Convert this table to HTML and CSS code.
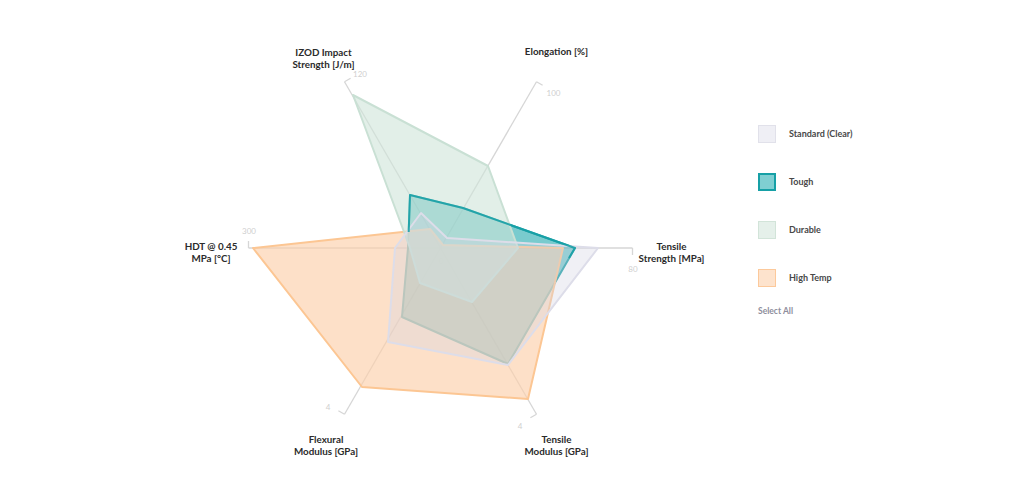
FILE: index.html
```html
<!DOCTYPE html>
<html lang="en">
<head>
<meta charset="utf-8">
<title>Material properties</title>
<link rel="stylesheet" href="styles.css">
</head>
<body>
<div class="page">
  <div class="chart">
    <svg class="radar" width="740" height="499" viewBox="0 0 740 499" xmlns="http://www.w3.org/2000/svg">
      <g class="axes">
        <line x1="440.5" y1="248" x2="632.5" y2="248"/>
        <line x1="632.5" y1="248" x2="632.5" y2="255"/>
        <line x1="440.5" y1="248" x2="536.5" y2="414.3"/>
        <line x1="536.5" y1="414.3" x2="530.4" y2="417.8"/>
        <line x1="440.5" y1="248" x2="344.5" y2="414.3"/>
        <line x1="344.5" y1="414.3" x2="338.4" y2="410.8"/>
        <line x1="440.5" y1="248" x2="248.5" y2="248"/>
        <line x1="248.5" y1="248" x2="248.5" y2="241"/>
        <line x1="440.5" y1="248" x2="344.5" y2="81.7"/>
        <line x1="344.5" y1="81.7" x2="350.6" y2="78.2"/>
        <line x1="440.5" y1="248" x2="536.5" y2="81.7"/>
        <line x1="536.5" y1="81.7" x2="542.6" y2="85.2"/>
      </g>
      <g class="ticks">
        <text x="441" y="261">0</text>
        <text x="360" y="73.5">120</text>
        <text x="553.5" y="92.5">100</text>
        <text x="633" y="269">80</text>
        <text x="249" y="230.5">300</text>
        <text x="328" y="406.5">4</text>
        <text x="520" y="426">4</text>
      </g>
      <polygon class="series-tough" points="575,248 508,364 402,317 408,248 410,195 463,208"/>
      <polygon class="series-high" points="563,248 528,399 362,387 253,248 430,229 443,245"/>
      <polygon class="series-durable" points="518,248 472,302 420,283 410,248 353,95 488,166"/>
      <polygon class="series-standard" points="598,248 508,365 388,342 395,248 421,213 447,238"/>
      <polyline class="tough-edge" points="408.7,232 410,195 463,208 575,248 569,258"/>
      <g class="labels">
        <text x="323.5" y="55.5">IZOD Impact</text>
        <text x="323.5" y="67.5">Strength [J/m]</text>
        <text x="556.5" y="55">Elongation [%]</text>
        <text x="671.5" y="249.5">Tensile</text>
        <text x="671.5" y="261.5">Strength [MPa]</text>
        <text x="211" y="249.5">HDT @ 0.45</text>
        <text x="211" y="261.5">MPa [°C]</text>
        <text x="326" y="442.5">Flexural</text>
        <text x="326" y="455">Modulus [GPa]</text>
        <text x="556.5" y="442.5">Tensile</text>
        <text x="556.5" y="455">Modulus [GPa]</text>
      </g>
    </svg>
  </div>
  <div class="legend">
    <div class="legend-item"><span class="swatch swatch-standard"></span><span class="legend-text">Standard (Clear)</span></div>
    <div class="legend-item"><span class="swatch swatch-tough"></span><span class="legend-text">Tough</span></div>
    <div class="legend-item"><span class="swatch swatch-durable"></span><span class="legend-text">Durable</span></div>
    <div class="legend-item"><span class="swatch swatch-high"></span><span class="legend-text">High Temp</span></div>
    <div class="select-all">Select All</div>
  </div>
</div>
</body>
</html>
```
FILE: styles.css
```css
html, body {
  margin: 0;
  padding: 0;
  background: #ffffff;
}

body {
  font-family: Lato, "Open Sans", "Liberation Sans", sans-serif;
  color: #333333;
}

.page {
  display: flex;
  width: 1024px;
  height: 499px;
}

.chart {
  width: 758px;
  flex: none;
}

.radar {
  display: block;
}

.axes line {
  stroke: #d6d6d6;
  stroke-width: 1.3;
  fill: none;
}

.ticks text {
  font-family: Lato, "Liberation Sans", sans-serif;
  font-size: 8px;
  fill: #cfcfcf;
  text-anchor: middle;
  dominant-baseline: central;
}

.labels text {
  font-family: Lato, "Liberation Sans", sans-serif;
  font-weight: 700;
  font-size: 9.8px;
  fill: #2b2b2b;
  text-anchor: middle;
}

.series-tough {
  fill: #1fa9ae;
  fill-opacity: 0.6;
  stroke: #18a0a6;
  stroke-width: 2;
  stroke-linejoin: round;
}

.tough-edge {
  fill: none;
  stroke: #18a0a6;
  stroke-width: 2;
  stroke-linejoin: round;
  stroke-opacity: 0.9;
}

.series-durable {
  fill: #cfe4d9;
  fill-opacity: 0.6;
  stroke: #c9e0d4;
  stroke-width: 2;
  stroke-linejoin: round;
}

.series-high {
  fill: #fcd0aa;
  fill-opacity: 0.65;
  stroke: #fcc693;
  stroke-width: 2;
  stroke-linejoin: round;
}

.series-standard {
  fill: #d4d4e2;
  fill-opacity: 0.35;
  stroke: #dddde9;
  stroke-width: 2;
  stroke-linejoin: round;
}

.legend {
  display: flex;
  flex-direction: column;
  padding-top: 125px;
}

.legend-item {
  display: flex;
  align-items: center;
  height: 18px;
  margin-bottom: 30px;
}

.legend-item:nth-child(4) {
  margin-bottom: 19px;
}

.swatch {
  box-sizing: border-box;
  width: 18px;
  height: 18px;
  border: 1.5px solid;
  flex: none;
}

.swatch-standard {
  background: #efeff5;
  border-color: #e1e1ea;
}

.swatch-tough {
  background: #7fcfd2;
  border: 2px solid #16a0a6;
}

.swatch-durable {
  background: #e5f0ea;
  border-color: #d2e4d9;
}

.swatch-high {
  background: #fde3cd;
  border-color: #fcc99b;
}

.legend-text {
  margin-left: 13px;
  margin-top: -2px;
  font-size: 9px;
  font-weight: 700;
  color: #484848;
}

.select-all {
  font-size: 8.5px;
  font-weight: 700;
  color: #8e8e9c;
}
```
